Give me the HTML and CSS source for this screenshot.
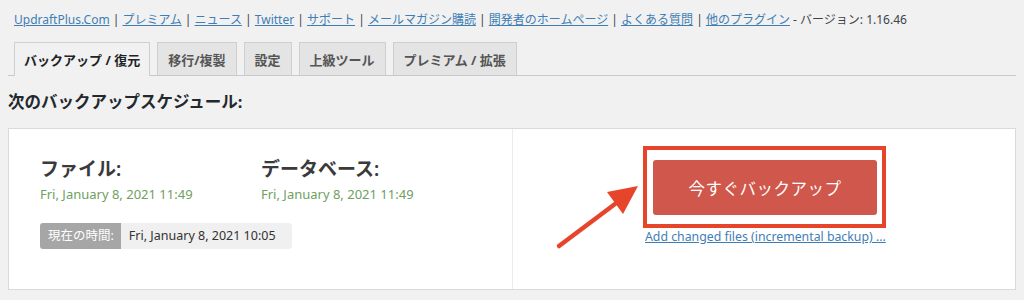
FILE: index.html
```html
<!DOCTYPE html>
<html lang="ja">
<head>
    <meta charset="UTF-8">
    <meta name="viewport" content="width=device-width, initial-scale=1.0">
    <title>UpdraftPlus バックアップ</title>
    <link rel="stylesheet" href="styles.css">
</head>
<body>
    <div class="wrap">
        <p class="top-links">
            <a href="#">UpdraftPlus.Com</a> | <a href="#">プレミアム</a> | <a href="#">ニュース</a> | <a href="#">Twitter</a> | <a href="#">サポート</a> | <a href="#">メールマガジン購読</a> | <a href="#">開発者のホームページ</a> | <a href="#">よくある質問</a> | <a href="#">他のプラグイン</a> - バージョン: 1.16.46
        </p>

        <nav class="nav-tabs">
            <a href="#" class="tab active">バックアップ / 復元</a>
            <a href="#" class="tab">移行/複製</a>
            <a href="#" class="tab">設定</a>
            <a href="#" class="tab">上級ツール</a>
            <a href="#" class="tab">プレミアム / 拡張</a>
        </nav>

        <h2 class="section-title">次のバックアップスケジュール:</h2>

        <div class="card">
            <div class="card-left">
                <div class="schedule">
                    <div class="schedule-item">
                        <h3>ファイル:</h3>
                        <span class="date">Fri, January 8, 2021 11:49</span>
                    </div>
                    <div class="schedule-item">
                        <h3>データベース:</h3>
                        <span class="date">Fri, January 8, 2021 11:49</span>
                    </div>
                </div>
                <div class="now-time">
                    <span class="now-label">現在の時間:</span>
                    <span class="now-value">Fri, January 8, 2021 10:05</span>
                </div>
            </div>
            <div class="card-right">
                <div class="backup-box">
                    <div class="highlight">
                        <button type="button" class="btn-backup">今すぐバックアップ</button>
                    </div>
                    <a href="#" class="incremental">Add changed files (incremental backup) ...</a>
                </div>
                <svg class="arrow" width="90" height="70" viewBox="0 0 90 70">
                    <line x1="4" y1="64" x2="60" y2="22" stroke="#e6442b" stroke-width="4.5" stroke-linecap="round"/>
                    <polygon points="83,4 52,10 68,32" fill="#e6442b"/>
                </svg>
            </div>
        </div>
    </div>
</body>
</html>
```

FILE: styles.css
```css
body {
    margin: 0;
    padding: 0;
    background-color: #f1f1f1;
    font-family: "Noto Sans", "Noto Sans CJK JP", sans-serif;
    color: #3c434a;
}

.wrap {
    padding: 0 8px;
}

.top-links {
    margin: 0;
    padding: 10px 0 0 6px;
    height: 23px;
    font-size: 12px;
    line-height: 20px;
    color: #3c434a;
    white-space: nowrap;
}

.top-links a {
    color: #3f7eb5;
}

.nav-tabs {
    display: flex;
    gap: 7px;
    margin-top: 9px;
    padding-left: 6px;
    border-bottom: 1px solid #c9c9c9;
    height: 33px;
}

.tab {
    display: flex;
    align-items: center;
    padding: 0 10px;
    height: 32px;
    border: 1px solid #cfcfcf;
    border-bottom: none;
    background-color: #e4e4e4;
    color: #555;
    font-size: 13px;
    font-weight: bold;
    text-decoration: none;
}

.tab.active {
    background-color: #f1f1f1;
    color: #1d2327;
    height: 33px;
    margin-bottom: -1px;
    padding: 0 9px;
}

.section-title {
    margin: 15px 0 0;
    height: 37px;
    font-size: 16.5px;
    line-height: 22px;
    color: #23282d;
}

.card {
    display: flex;
    height: 160px;
    background: #fff;
    border: 1px solid #dadada;
}

.card-left {
    width: 504px;
    padding: 27px 0 0 31px;
    border-right: 1px solid #ececec;
    box-sizing: border-box;
}

.schedule {
    display: flex;
}

.schedule-item {
    width: 221px;
}

.schedule-item h3 {
    margin: 0;
    font-size: 19px;
    font-weight: 600;
    line-height: 26px;
    color: #3a3a3a;
}

.date {
    display: block;
    margin-top: 4px;
    font-size: 13px;
    line-height: 17px;
    color: #6fa060;
}

.now-time {
    display: inline-flex;
    margin-top: 20px;
    font-size: 12.5px;
    line-height: 26px;
    border-radius: 3px;
    overflow: hidden;
}

.now-label {
    padding: 0 7px 0 8px;
    background-color: #a6a6a6;
    color: #fff;
}

.now-value {
    padding: 0 8px;
    background-color: #f0f0f0;
    color: #333;
    width: 155px;
}

.card-right {
    position: relative;
    flex: 1;
}

.backup-box {
    position: absolute;
    left: 130px;
    top: 17px;
    display: flex;
    flex-direction: column;
    align-items: flex-start;
}

.highlight {
    width: 243px;
    height: 82px;
    border: 4px solid #e6442b;
    padding: 10px 5px 9px 6px;
    box-sizing: border-box;
}

.btn-backup {
    width: 224px;
    height: 55px;
    border: none;
    border-radius: 3px;
    background-color: #d0574b;
    color: #fff;
    font-family: "Noto Sans CJK JP", sans-serif;
    font-size: 16.5px;
    letter-spacing: 0.5px;
    cursor: pointer;
}

.incremental {
    margin: 0 0 0 2px;
    font-size: 12.3px;
    line-height: 17px;
    color: #3f7eb5;
}

.arrow {
    position: absolute;
    left: 42px;
    top: 53px;
}
```
